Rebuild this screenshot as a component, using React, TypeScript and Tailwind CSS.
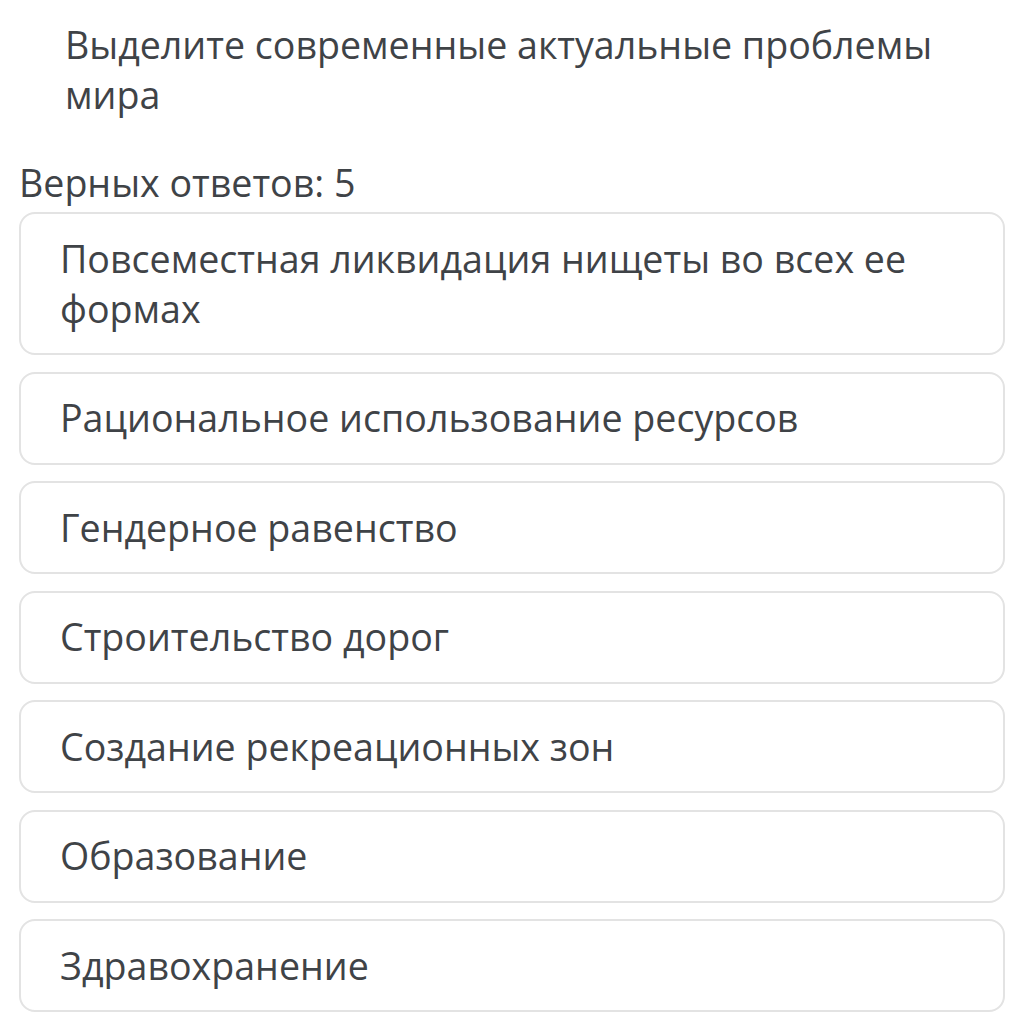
const OPTIONS = [
  "Повсеместная ликвидация нищеты во всех ее формах",
  "Рациональное использование ресурсов",
  "Гендерное равенство",
  "Строительство дорог",
  "Создание рекреационных зон",
  "Образование",
  "Здравохранение",
];

export default function App() {
  return (
    <div className="min-h-screen bg-white font-['Open_Sans',sans-serif] text-[#3f4347]">
      {/* вопрос */}
      <h1 className="px-[65px] pt-[20px] text-[37.6px] font-normal leading-[50px]">
        Выделите современные актуальные проблемы мира
      </h1>

      <p className="mt-[38px] pl-[19px] text-[37.6px] leading-[50px]">Верных ответов: 5</p>

      {/* варианты */}
      <div className="mt-[4px] ml-[19px] flex w-[986px] flex-col gap-[16.5px] pb-6">
        {OPTIONS.map((option) => (
          <div
            key={option}
            className="rounded-[16px] border-2 border-[#e3e3e3] bg-white py-[19.5px] pl-[39px] pr-[60px] text-[37.6px] leading-[50px]"
          >
            {option}
          </div>
        ))}
      </div>
    </div>
  );
}
